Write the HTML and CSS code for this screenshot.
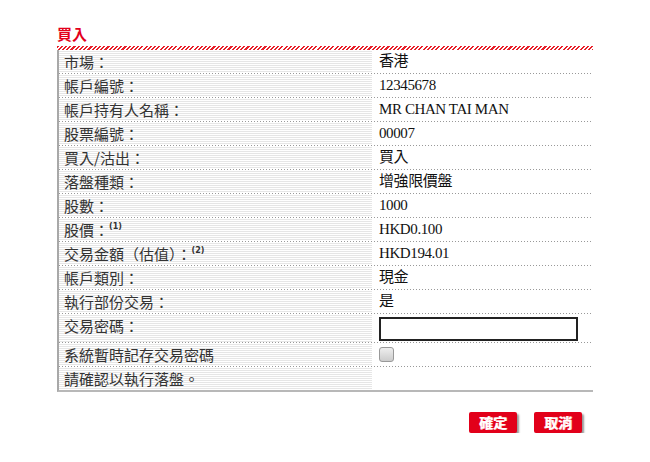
FILE: index.html
```html
<!DOCTYPE html>
<html>
<head>
<meta charset="utf-8">
<title>買入</title>
<link rel="stylesheet" href="styles.css">
</head>
<body>
<div class="page">
 <h1 class="title">買入</h1>
 <div class="hatch"></div>
 <div class="form">
  <div class="row"><div class="label">市場：</div><div class="value">香港</div></div>
  <div class="row"><div class="label">帳戶編號：</div><div class="value">12345678</div></div>
  <div class="row"><div class="label">帳戶持有人名稱：</div><div class="value">MR CHAN TAI MAN</div></div>
  <div class="row"><div class="label">股票編號：</div><div class="value">00007</div></div>
  <div class="row"><div class="label">買入/沽出：</div><div class="value">買入</div></div>
  <div class="row"><div class="label">落盤種類：</div><div class="value">增強限價盤</div></div>
  <div class="row"><div class="label">股數：</div><div class="value">1000</div></div>
  <div class="row"><div class="label">股價：<sup>(1)</sup></div><div class="value">HKD0.100</div></div>
  <div class="row"><div class="label">交易金額（估值）：<sup>(2)</sup></div><div class="value">HKD194.01</div></div>
  <div class="row"><div class="label">帳戶類別：</div><div class="value">現金</div></div>
  <div class="row"><div class="label">執行部份交易：</div><div class="value">是</div></div>
  <div class="row tall"><div class="label">交易密碼：</div><div class="value"><input type="password" class="pwd"></div></div>
  <div class="row"><div class="label">系統暫時記存交易密碼</div><div class="value"><input type="checkbox" class="chk"></div></div>
  <div class="row last"><div class="label">請確認以執行落盤。</div><div class="value"></div></div>
 </div>
 <div class="buttons">
  <button class="btn">確定</button>
  <button class="btn">取消</button>
 </div>
</div>
</body>
</html>
```

FILE: styles.css
```css
body {
 margin: 0;
 background: #fff;
 font-family: "Noto Sans CJK TC", sans-serif;
}
.page {
 width: 536px;
 padding: 25px 0 0 57px;
}
.title {
 margin: 0 0 4px 0;
 font-size: 15px;
 line-height: 17px;
 font-weight: bold;
 color: #e3001b;
}
.hatch {
 height: 4px;
 background: repeating-linear-gradient(135deg, #e8202a 0 1.5px, #fff 1.5px 3px);
}
.form {
 border-left: 2px solid #a8a8a8;
 border-bottom: 2px solid #b8b8b8;
}
.row {
 display: flex;
 box-sizing: border-box;
 height: 24px;
 padding-bottom: 1px;
 background: linear-gradient(to right, #999 1px, transparent 1px) left bottom / 3px 1px repeat-x;
}
.row.tall {
 height: 29px;
}
.row.last {
 background: none;
 height: 23px;
 padding-bottom: 0;
}
.label {
 width: 308px;
 padding-left: 5px;
 font-size: 15px;
 line-height: 23px;
 color: #333;
 background: repeating-linear-gradient(#fff 0 1px, #e6e6e6 1px 2px);
 white-space: nowrap;
 overflow: hidden;
}
.label sup {
 font-family: "DejaVu Sans", sans-serif;
 font-size: 8px;
 font-weight: bold;
 vertical-align: 7px;
 line-height: 0;
}
.value {
 flex: 1;
 padding-left: 7px;
 font-family: "Liberation Serif", "Noto Sans CJK TC", serif;
 font-size: 15px;
 letter-spacing: -0.4px;
 line-height: 23px;
 color: #111;
 overflow: hidden;
}
.pwd {
 box-sizing: border-box;
 width: 199px;
 height: 24px;
 margin: 3px 0 0 0;
 border: 2px solid #222;
 padding: 0 4px;
 vertical-align: top;
}
.chk {
 appearance: none;
 width: 15px;
 height: 15px;
 margin: 4px 0 0 0;
 border: 1px solid #999;
 border-radius: 3px;
 background: linear-gradient(#eee, #ccc);
 vertical-align: top;
}
.buttons {
 display: flex;
 justify-content: flex-end;
 gap: 17px;
 margin-top: 20px;
 padding-right: 11px;
}
.btn {
 width: 48px;
 height: 21px;
 padding: 0;
 border: 0;
 border-radius: 2px;
 background: #e2001a;
 color: #fff;
 font-family: "Noto Sans CJK TC", serif;
 font-size: 14px;
 font-weight: bold;
 line-height: 21px;
 box-shadow: 2px 2px 2px #999;
 text-shadow: 1px 0 0 #fbb;
}
```
